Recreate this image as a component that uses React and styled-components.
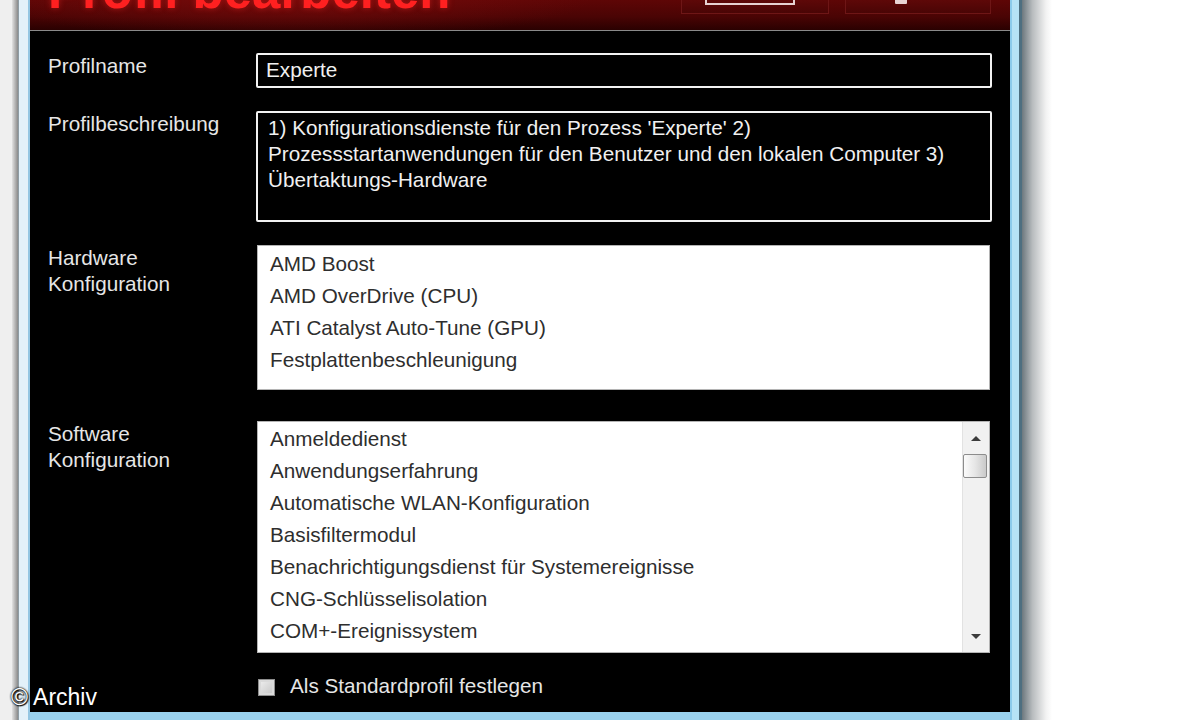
import React from "react";
import styled, { createGlobalStyle } from "styled-components";

const Global = createGlobalStyle`
  html, body { margin: 0; padding: 0; background: #ffffff; }
  body { font-family: "Liberation Sans", Arial, sans-serif; }
  * { box-sizing: border-box; }
`;

const FS = "20.7px";

const Page = styled.div`
  position: relative;
  display: flex;
  width: 1200px;
  height: 720px;
  overflow: hidden;
  background: #ffffff;
`;

const Gutter = styled.div`
  width: 12px;
  flex: none;
  background: #efefef;
`;

const ShadowLeft = styled.div`
  width: 6px;
  flex: none;
  background: linear-gradient(90deg, #e2e2e2, #8a8a8a);
`;

const ShadowRight = styled.div`
  width: 30px;
  flex: none;
  background: linear-gradient(90deg, #6c787e, #b8bcbe 35%, #f2f2f2 80%, #ffffff);
`;

const Window = styled.div`
  width: 1004px;
  flex: none;
  display: flex;
  flex-direction: column;
  padding: 0 12px 8px 12px;
  background: linear-gradient(
    90deg,
    #8e9ca4 0 1px,
    #e3f1f9 1px 10px,
    #94c6e2 10px 12px,
    #9ad2ee 12px calc(100% - 12px),
    #8ccbeb calc(100% - 12px) calc(100% - 10px),
    #b6e3f6 calc(100% - 10px) calc(100% - 3px),
    #4d6f80 calc(100% - 3px)
  );
`;

const Content = styled.div`
  flex: 1;
  display: flex;
  flex-direction: column;
  background: #000000;
  overflow: hidden;
`;

const Header = styled.div`
  height: 31px;
  flex: none;
  display: flex;
  align-items: flex-start;
  overflow: hidden;
  border-bottom: 1px solid #8a8a8a;
  background:
    radial-gradient(ellipse 300px 40px at 260px 0px, rgba(140, 14, 14, 0.55), transparent),
    linear-gradient(180deg, #5e0606 0%, #4a0404 55%, #2a0101 100%);
`;

const Title = styled.h1`
  margin: -35px 0 0 18px;
  font-family: "Liberation Sans", Arial, sans-serif;
  font-weight: 700;
  font-size: 51px;
  line-height: 51px;
  color: #ff2020;
  text-shadow: 0 0 6px rgba(255, 40, 40, 0.45);
  white-space: nowrap;
`;

const HeaderButtons = styled.div`
  margin-left: auto;
  margin-right: 19px;
  display: flex;
  gap: 16px;
`;

const HeaderButton = styled.div`
  width: ${(p) => p.$w}px;
  height: 14px;
  display: flex;
  justify-content: center;
  align-items: flex-start;
  border: 1px solid #6e1616;
  border-top: none;
  background: linear-gradient(180deg, #5e0808, #4a0505);
`;

const FieldGlyph = styled.span`
  display: block;
  width: 90px;
  height: 5px;
  margin-left: -10px;
  border: 2px solid #e6d2d2;
  border-top: none;
`;

const SmallGlyph = styled.span`
  display: block;
  width: 12px;
  height: 4px;
  margin-left: -34px;
  background: #e8d4d4;
  border-radius: 0 0 1px 1px;
`;

const Form = styled.div`
  display: grid;
  grid-template-columns: 208px 1fr;
  row-gap: 23px;
  padding: 22px 18px 0 18px;
`;

const Label = styled.div`
  margin-top: ${(p) => p.$mt || 0}px;
  font-size: ${FS};
  line-height: 26px;
  color: #e6e6e6;
  white-space: nowrap;
`;

const TextField = styled.div`
  height: 35px;
  border: 2px solid #f2f2f2;
  border-radius: 2px;
  padding: 2px 8px;
  font-size: ${FS};
  line-height: 26px;
  color: #f0f0f0;
  background: #000;
`;

const TextArea = styled.div`
  height: 111px;
  border: 2px solid #f2f2f2;
  border-radius: 2px;
  padding: 2px 10px;
  font-size: ${FS};
  line-height: 26px;
  color: #f0f0f0;
  background: #000;
  white-space: nowrap;
`;

const ListBox = styled.div`
  height: ${(p) => p.$h}px;
  margin: ${(p) => p.$mt || 0}px 2px 0 1px;
  display: flex;
  background: #ffffff;
  border: 1px solid #b4b4b4;
  overflow: hidden;
`;

const Items = styled.ul`
  flex: 1;
  list-style: none;
  margin: 0;
  padding: ${(p) => p.$pt}px 12px 0 12px;
  overflow: hidden;
`;

const Item = styled.li`
  font-size: ${FS};
  line-height: 32px;
  color: #2e2e2e;
  white-space: nowrap;
`;

const Scrollbar = styled.div`
  width: 27px;
  flex: none;
  display: flex;
  flex-direction: column;
  background: #f1f1f1;
  border-left: 1px solid #e2e2e2;
`;

const ScrollBtn = styled.div`
  height: 32px;
  flex: none;
  display: flex;
  align-items: center;
  justify-content: center;
`;

const Arrow = styled.span`
  width: 0;
  height: 0;
  border-left: 5px solid transparent;
  border-right: 5px solid transparent;
  ${(p) =>
    p.$down
      ? "border-top: 5px solid #3c3c3c;"
      : "border-bottom: 5px solid #3c3c3c;"}
`;

const Thumb = styled.div`
  height: 24px;
  margin: 0 2px 0 0;
  border: 1px solid #8c8c8c;
  border-radius: 2px;
  background: linear-gradient(90deg, #fbfbfb, #e6e6e6 50%, #c9c9c9);
`;

const Track = styled.div`
  flex: 1;
`;

const CheckRow = styled.label`
  grid-column: 2;
  margin: -1px 0 0 2px;
  height: 22px;
  display: flex;
  align-items: center;
  gap: 15px;
  font-size: ${FS};
  color: #e6e6e6;
  white-space: nowrap;
`;

const CheckBox = styled.span`
  width: 17px;
  height: 17px;
  flex: none;
  margin-top: 2px;
  border: 1px solid #8e8e8e;
  background: linear-gradient(135deg, #f0f0f0, #c4c4c4);
  box-shadow: inset 0 0 0 2px #dadada;
`;

const Watermark = styled.div`
  position: absolute;
  left: 11px;
  top: 684px;
  font-family: "Liberation Sans", Arial, sans-serif;
  font-size: 23px;
  line-height: 26px;
  color: #ffffff;
  text-shadow: 0 0 2px #000, 0 0 2px #000, 1px 1px 1px #000;
`;

const hardware = [
  "AMD Boost",
  "AMD OverDrive (CPU)",
  "ATI Catalyst Auto-Tune (GPU)",
  "Festplattenbeschleunigung",
];

const software = [
  "Anmeldedienst",
  "Anwendungserfahrung",
  "Automatische WLAN-Konfiguration",
  "Basisfiltermodul",
  "Benachrichtigungsdienst für Systemereignisse",
  "CNG-Schlüsselisolation",
  "COM+-Ereignissystem",
];

export default function App() {
  return (
    <>
      <Global />
      <Page>
        <Gutter />
        <ShadowLeft />
        <Window>
          <Content>
            <Header>
              <Title>Profil bearbeiten</Title>
              <HeaderButtons>
                <HeaderButton $w={148}>
                  <FieldGlyph />
                </HeaderButton>
                <HeaderButton $w={146}>
                  <SmallGlyph />
                </HeaderButton>
              </HeaderButtons>
            </Header>
            <Form>
              <Label>Profilname</Label>
              <TextField>Experte</TextField>

              <Label>Profilbeschreibung</Label>
              <TextArea>
                1) Konfigurationsdienste für den Prozess 'Experte' 2)
                <br />
                Prozessstartanwendungen für den Benutzer und den lokalen Computer 3)
                <br />
                Übertaktungs-Hardware
              </TextArea>

              <Label>
                Hardware
                <br />
                Konfiguration
              </Label>
              <ListBox $h={145}>
                <Items $pt={2}>
                  {hardware.map((h) => (
                    <Item key={h}>{h}</Item>
                  ))}
                </Items>
              </ListBox>

              <Label $mt={8}>
                Software
                <br />
                Konfiguration
              </Label>
              <ListBox $h={232} $mt={8}>
                <Items $pt={1}>
                  {software.map((s) => (
                    <Item key={s}>{s}</Item>
                  ))}
                </Items>
                <Scrollbar>
                  <ScrollBtn>
                    <Arrow />
                  </ScrollBtn>
                  <Thumb />
                  <Track />
                  <ScrollBtn>
                    <Arrow $down />
                  </ScrollBtn>
                </Scrollbar>
              </ListBox>

              <CheckRow>
                <CheckBox />
                Als Standardprofil festlegen
              </CheckRow>
            </Form>
          </Content>
        </Window>
        <ShadowRight />
        <Watermark>© Archiv</Watermark>
      </Page>
    </>
  );
}
